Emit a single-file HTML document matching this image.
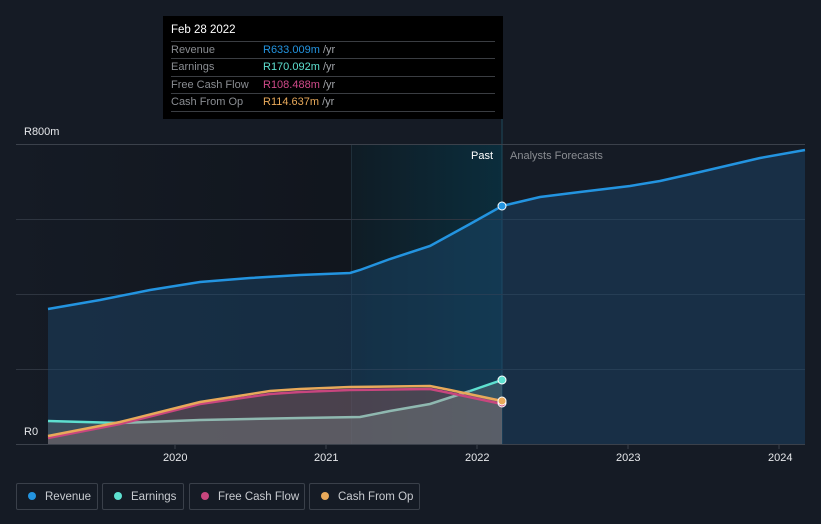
<!DOCTYPE html>
<html><head><meta charset="utf-8"><style>
body{margin:0;width:821px;height:524px;background:#151b25;font-family:"Liberation Sans",sans-serif;overflow:hidden;position:relative}
svg{position:absolute;left:0;top:0}
.tt{position:absolute;left:163px;top:16px;width:340px;height:103px;background:#000}
.tt .d{position:absolute;left:8px;top:8px;color:#fff;font-size:11.5px}
.row{position:absolute;left:8px;width:324px;height:17px;border-top:1px solid #3a3d42;font-size:11px;line-height:17px}
.row .l{color:#8a8d92;position:absolute;left:0}
.row .v{position:absolute;left:92px}
.row .u{color:#a0a3a8}
.leg{position:absolute;top:483px;height:27px;border:1px solid #3a404a;border-radius:2px;color:#c8cbd0;font-size:11.5px;line-height:26px;box-sizing:border-box;white-space:nowrap}
.leg i{display:inline-block;width:8px;height:8px;border-radius:50%;margin:0 9px 0 11px;vertical-align:0}
.ax{position:absolute;color:#e6e8eb;font-size:11px}
</style></head><body>
<svg width="821" height="524">
<defs>
<linearGradient id="past" x1="0" x2="1"><stop offset="0" stop-color="#151b25"/><stop offset="1" stop-color="#0f131a"/></linearGradient>
<linearGradient id="band" x1="0" x2="1"><stop offset="0" stop-color="#0f1c25"/><stop offset="1" stop-color="#0b2d3c"/></linearGradient>
</defs>
<rect x="16" y="144" width="486" height="300" fill="url(#past)"/>
<rect x="351" y="144" width="151" height="300" fill="url(#band)"/>
<line x1="351.5" y1="144" x2="351.5" y2="444" stroke="#1f2f3a" stroke-width="1"/>
<line x1="502" y1="119" x2="502" y2="444" stroke="#1d4a5c" stroke-width="1"/>
<g stroke="#2e3540" stroke-width="1">
<line x1="16" y1="144.5" x2="805" y2="144.5" stroke="#3b414b"/>
<line x1="16" y1="219.5" x2="805" y2="219.5"/>
<line x1="16" y1="294.5" x2="805" y2="294.5"/>
<line x1="16" y1="369.5" x2="805" y2="369.5"/>
<line x1="16" y1="444.5" x2="805" y2="444.5" stroke="#3b414b"/>
</g>
<path d="M48,309 L100,300 L150,290 L200,282 L250,278 L300,275 L350,273 L360,270 L390,259 L430,246 L470,224 L502,206 L540,197 L580,192 L630,186 L660,181 L700,172 L760,158 L805,150 L805,444 L48,444Z" fill="#1c4a6e" fill-opacity="0.45"/>
<path d="M48,438 L120,424 L180,409 L200,404 L270,394 L300,392 L350,389 L430,388 L450,392 L502,401 L502,444 L48,444Z" fill="#8a5a5a" fill-opacity="0.45"/>
<path d="M48,421 L120,423 L200,420 L300,418 L360,417 L390,411 L430,404 L470,391 L502,380 L502,444 L48,444Z" fill="#7a8a8a" fill-opacity="0.35"/>
<path d="M48,309 L100,300 L150,290 L200,282 L250,278 L300,275 L350,273 L360,270 L390,259 L430,246 L470,224 L502,206 L540,197 L580,192 L630,186 L660,181 L700,172 L760,158 L805,150" fill="none" stroke="#2394e0" stroke-width="2.5"/>
<path d="M48,421 L120,423" fill="none" stroke="#5ee0d0" stroke-width="2.5"/>
<path d="M120,423 L200,420 L300,418 L360,417 L390,411 L430,404 L470,391" fill="none" stroke="#8fb8b0" stroke-width="2.5"/>
<path d="M470,391 L502,380" fill="none" stroke="#5ee0d0" stroke-width="2.5"/>
<path d="M48,438 L120,424 L180,409 L200,404 L270,394 L300,392 L350,390 L430,389 L450,393 L502,404" fill="none" stroke="#c8467e" stroke-width="2.5"/>
<path d="M48,436 L120,422 L180,407 L200,402 L270,391 L300,389 L350,387 L430,386 L450,390 L502,401" fill="none" stroke="#e8a95a" stroke-width="2.5"/>
<circle cx="502" cy="206" r="4" fill="#2394e0" stroke="#fff" stroke-width="1"/>
<circle cx="502" cy="380" r="4" fill="#5ee0d0" stroke="#fff" stroke-width="1"/>
<circle cx="502" cy="403" r="4" fill="#c8467e" stroke="#fff" stroke-width="1"/>
<circle cx="502" cy="401" r="4" fill="#e8a95a" stroke="#fff" stroke-width="1"/>
<g stroke="#3b414b"><line x1="175" y1="444" x2="175" y2="449"/><line x1="326" y1="444" x2="326" y2="449"/><line x1="477" y1="444" x2="477" y2="449"/><line x1="628" y1="444" x2="628" y2="449"/><line x1="779" y1="444" x2="779" y2="449"/></g>
</svg>
<div class="tt"><div class="d">Feb 28 2022</div>
<div class="row" style="top:25px"><span class="l">Revenue</span><span class="v"><span style="color:#2394e0">R633.009m</span> <span class="u">/yr</span></span></div>
<div class="row" style="top:42px"><span class="l">Earnings</span><span class="v"><span style="color:#5ee0d0">R170.092m</span> <span class="u">/yr</span></span></div>
<div class="row" style="top:60px"><span class="l">Free Cash Flow</span><span class="v"><span style="color:#d04a8a">R108.488m</span> <span class="u">/yr</span></span></div>
<div class="row" style="top:77px"><span class="l">Cash From Op</span><span class="v"><span style="color:#e8a95a">R114.637m</span> <span class="u">/yr</span></span></div>
<div class="row" style="top:95px;height:0"></div>
</div>
<div class="ax" style="left:24px;top:126px">R800m</div>
<div class="ax" style="left:24px;top:426px">R0</div>
<div class="ax" style="left:471px;top:150px;color:#fff">Past</div>
<div class="ax" style="left:510px;top:150px;color:#8a8d92">Analysts Forecasts</div>
<div class="ax" style="left:163px;top:452px">2020</div>
<div class="ax" style="left:314px;top:452px">2021</div>
<div class="ax" style="left:465px;top:452px">2022</div>
<div class="ax" style="left:616px;top:452px">2023</div>
<div class="ax" style="left:768px;top:452px">2024</div>
<div class="leg" style="left:16px;width:82px"><i style="background:#2394e0"></i>Revenue</div>
<div class="leg" style="left:102px;width:82px"><i style="background:#5ee0d0"></i>Earnings</div>
<div class="leg" style="left:189px;width:116px"><i style="background:#c8467e"></i>Free Cash Flow</div>
<div class="leg" style="left:309px;width:111px"><i style="background:#e8a95a"></i>Cash From Op</div>
</body></html>
